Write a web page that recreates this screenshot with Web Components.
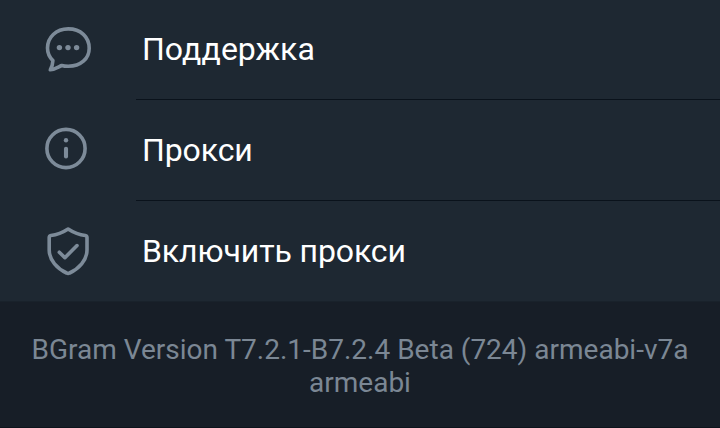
<!DOCTYPE html>
<html lang="ru">
<head>
<meta charset="utf-8">
<title>BGram</title>
<style>
    body {
        margin: 0;
        background: #171e27;
        font-family: Roboto, "Noto Sans", sans-serif;
    }
</style>
</head>
<body>
<settings-screen>
    <settings-row icon="chat">Поддержка</settings-row>
    <settings-row icon="info">Прокси</settings-row>
    <settings-row icon="shield">Включить прокси</settings-row>
    <version-info slot="footer">BGram Version T7.2.1-B7.2.4 Beta (724) armeabi-v7a armeabi</version-info>
</settings-screen>

<script>
const icons = {
    chat: `
        <path d="M18.8 40.5C20.7 41.1 23 41.3 25.3 41.3C37.6 41.3 46.2 33.8 46.2 23.2C46.2 12.1 37.6 3.9 25.3 3.9C12.9 3.9 4.5 12.4 4.5 23C4.5 28.5 6.6 32.4 9.9 35.6C9.8 39 8.9 41.8 7.3 44.8C11.8 44.6 15 42.2 18.8 40.5Z"/>
        <g class="fill"><circle cx="16.4" cy="22.6" r="2.7"/><circle cx="25" cy="22.6" r="2.7"/><circle cx="33.6" cy="22.6" r="2.7"/></g>`,
    info: `
        <circle cx="23" cy="22.5" r="19.1"/>
        <circle class="fill" cx="23" cy="14.2" r="2.2"/>
        <path class="stem" d="M23 22.7V30.5"/>`,
    shield: `
        <path d="M25.1 3C19.6 6.6 13.4 8.9 7.9 9.5Q6.2 9.8 6.2 11.6V24C6.2 34.4 14.6 42.8 23.6 47Q25.1 47.8 26.6 47C35.6 42.8 44 34.4 44 24V11.6Q44 9.8 42.3 9.5C36.8 8.9 30.6 6.6 25.1 3Z"/>
        <path d="M16.3 26.2L21.9 31.7L34 19.6"/>`
};

class SettingsScreen extends HTMLElement {
    constructor() {
        super();

        this.attachShadow({ mode: 'open' });
    }

    connectedCallback() {
        this.shadowRoot.innerHTML = `
            <style>
                :host {
                    display: flex;
                    flex-direction: column;
                    box-sizing: border-box;
                    height: 428px;
                    border-bottom: 1px solid #0d141c;
                }
                .list {
                    background: #1e2832;
                }
            </style>
            <div class="list"><slot></slot></div>
            <slot name="footer"></slot>
        `;
    }
}

class SettingsRow extends HTMLElement {
    constructor() {
        super();

        this.attachShadow({ mode: 'open' });
    }

    connectedCallback() {
        this.shadowRoot.innerHTML = `
            <style>
                :host {
                    display: grid;
                    grid-template-columns: 93px 1fr;
                    align-items: center;
                    padding-left: 43px;
                    color: #fff;
                    font-size: 32px;
                    letter-spacing: -0.1px;
                }
                :host(:first-of-type) {
                    letter-spacing: 0;
                }
                svg {
                    width: 50px;
                    height: 50px;
                    fill: none;
                    stroke: #7d8b99;
                    stroke-width: 3.6;
                    stroke-linecap: round;
                    stroke-linejoin: round;
                }
                .fill {
                    fill: #7d8b99;
                    stroke: none;
                }
                .stem {
                    stroke-width: 4.1;
                }
                .label {
                    box-sizing: border-box;
                    height: 101px;
                    padding-left: 6px;
                    line-height: 100px;
                    border-bottom: 1px solid #0a121b;
                }
                :host(:first-of-type) .label {
                    height: 100px;
                    line-height: 98px;
                }
                :host(:last-of-type) .label {
                    height: 100px;
                    border-bottom: none;
                }
            </style>
            <svg viewBox="0 0 50 50">${icons[this.getAttribute('icon')]}</svg>
            <div class="label"><slot></slot></div>
        `;
    }
}

class VersionInfo extends HTMLElement {
    constructor() {
        super();

        this.attachShadow({ mode: 'open' });
    }

    connectedCallback() {
        this.shadowRoot.innerHTML = `
            <style>
                :host {
                    display: block;
                    flex: 1;
                    padding: 31px 20px 0;
                    border-top: 1px solid #19222b;
                    color: #7b8794;
                    font-size: 28px;
                    line-height: 33px;
                    text-align: center;
                }
            </style>
            <slot></slot>
        `;
    }
}

window.customElements.define('settings-screen', SettingsScreen);
window.customElements.define('settings-row', SettingsRow);
window.customElements.define('version-info', VersionInfo);
</script>
</body>
</html>
